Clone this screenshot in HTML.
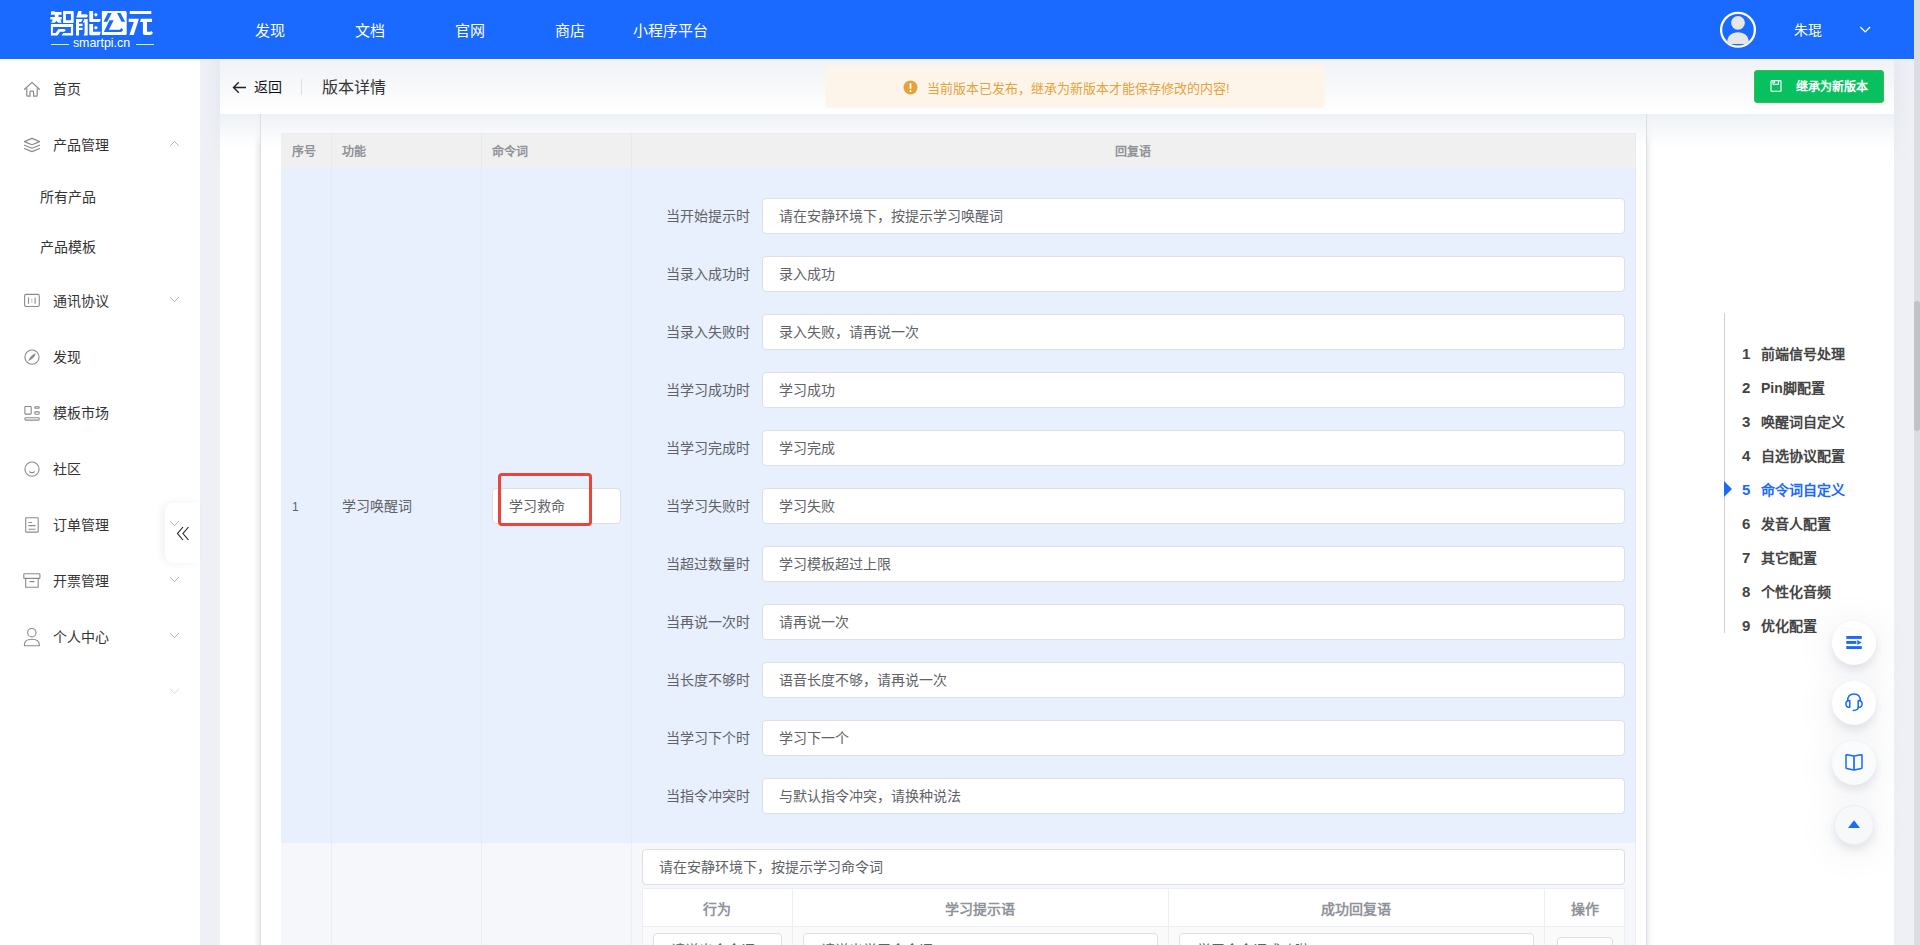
<!DOCTYPE html>
<html lang="zh-CN"><head><meta charset="utf-8">
<style>
*{margin:0;padding:0;box-sizing:border-box}
html,body{width:1920px;height:945px;overflow:hidden;background:#fff;font-family:"Liberation Sans",sans-serif;}
.a{position:absolute}
.t{position:absolute;white-space:nowrap;line-height:1}
.nav{color:#fff;font-size:15px;top:23px;width:100px;text-align:center}
.mi{font-size:14px;color:#333;left:53px}
.sub{font-size:14px;color:#333;left:40px}
.strip{background:#eef0f5}
.lbl{font-size:14px;color:#606266;left:631px;width:119px;text-align:right}
.inp{background:#fff;border:1px solid #dcdfe6;border-radius:4px}
.it{font-size:14px;color:#606266}
.rn{font-size:14px;font-weight:bold;color:#444}
.fb{border-radius:50%;background:#fff;box-shadow:0 5px 10px rgba(40,50,90,.11),0 4px 44px rgba(40,50,90,.09)}
.ic{position:absolute;left:24px}
.chev{position:absolute;left:169px}
</style></head><body>
<div class="a" style="left:0;top:0;width:1914px;height:59px;background:#1a6aff"></div>
<svg class="a" style="left:0;top:0" width="160" height="59" viewBox="0 0 160 59"><g fill="#fff">
<path d="M51.2 11.3 H54.8 V12.1 H61.6 V14.7 H50.8 Z M54.8 14.5 H58.6 V17.2 H54.8 Z M50.3 17 H61.7 V19.6 H60.3 L61.7 22.8 H58.2 L56.4 20.9 L54.8 22.8 H51.1 L52.9 19.6 H50.3 Z"/>
<path fill-rule="evenodd" d="M63.1 11 H72.7 Q73.7 11 73.7 12 V21.9 Q73.7 22.9 72.7 22.9 H63.1 Z M65.9 13.9 V20.2 H70.9 V13.9 Z"/>
<path d="M50.9 24 H73.1 V34.4 Q73.1 35.6 71.9 35.6 H61.6 L63.2 33.1 H70.9 V26.9 H52.9 V33.1 H55.6 L58.5 29 H64.2 L65.8 30.3 L64.2 31.7 H60 L57.6 35.6 H50.9 Z"/>
<path d="M78.3 11.1 H81.7 L81 14.3 H86.6 L88 15.8 L86.8 17.4 H76.3 Z"/>
<path d="M76 19.1 H82.8 L81.2 22 H79 V23.7 H82.6 V26 H79 V27.7 H82.6 V30 H79 V35.4 H76 Z M84.3 19.1 H87.7 V35.4 H83.7 L84.6 33 V22.6 H82.9 Z"/>
<path d="M89.3 11 H93.1 V19.1 H100.8 L100.2 21 Q100 22 99 22 H90.6 Q89.3 22 89.3 20.8 Z M89.3 23.9 H93.1 V31.8 H100.8 L100.2 34 Q100 35.3 99 35.3 H90.6 Q89.3 35.3 89.3 34 Z"/>
<path d="M95.9 12.8 L97.9 14.8 L95.9 16.8 L93.9 14.8 Z M95.9 25.7 L97.9 27.7 L95.9 29.7 L93.9 27.7 Z"/>
<path fill-rule="evenodd" d="M101.9 10.9 H125.2 Q126.7 10.9 126.7 12.4 V33.5 Q126.7 35 125.2 35 H101.9 Z M107.9 13.1 H111.7 L107.3 21.8 H103.5 Z M117 13.1 H120.5 L125.1 21.8 H121.6 Z M109.5 20.2 H113.7 L108.9 29.7 H119.7 L121.6 28 L123.2 29.9 L121.3 32.1 H103.8 Z"/>
<path d="M129.7 11 H151.3 V13.9 H129.7 Z M128.7 18.8 H138.9 L137.9 22 L133.7 35 H129.4 L133.8 22 H128.7 Z M140.9 18.8 H152 V22 H147 V31.8 H150.4 L151.4 30.9 L153 33.1 L151.5 34.6 Q151 35 150 35 H144.6 Q142.9 35 142.9 33.3 V22 H140 Z"/>
</g>
<text x="101.5" y="47.3" font-family="Liberation Sans" font-size="12.4" fill="#fff" text-anchor="middle">smartpi.cn</text>
<rect x="51" y="44" width="18" height="1" fill="#d8e6ff"/><rect x="136" y="44" width="18" height="1" fill="#d8e6ff"/>
</svg>

<div class="t nav" style="left:220px">发现</div>
<div class="t nav" style="left:320px">文档</div>
<div class="t nav" style="left:420px">官网</div>
<div class="t nav" style="left:520px">商店</div>
<div class="t nav" style="left:620px">小程序平台</div>
<svg class="a" style="left:1720px;top:11px" width="37" height="38" viewBox="0 0 37 38">
 <circle cx="18" cy="18.8" r="16.9" fill="none" stroke="#fff" stroke-width="2.3"/>
 <circle cx="18" cy="11.8" r="6.9" fill="#e6e6e6"/>
 <path d="M7.2 33 V31.5 C7.2 24.8 12 21.3 18 21.3 C24 21.3 28.8 24.8 28.8 31.5 V33 Z" fill="#e6e6e6"/>
</svg>
<div class="t" style="left:1794px;top:23px;font-size:14px;color:#fff">朱琨</div>
<svg class="a" style="left:1859px;top:25px" width="13" height="9"><path d="M1.3 2 L6.2 6.9 L11.1 2" fill="none" stroke="#fff" stroke-width="1.3"/></svg>
<div class="a strip" style="left:200px;top:59px;width:20px;height:886px"></div>
<div class="a strip" style="left:1894px;top:59px;width:20px;height:886px"></div>
<div class="a" style="left:1914px;top:0;width:6px;height:945px;background:#dcdde1"></div>
<div class="a" style="left:1914px;top:301px;width:6px;height:130px;background:#c1c2c6;border-radius:3px"></div>
<div class="t mi" style="top:82px">首页</div>
<svg class="a" style="left:24px;top:81px" width="16" height="16" viewBox="0 0 16 16"><path d="M0.6 8.3 L8 1.4 L15.4 8.3" fill="none" stroke="#8a8a8a" stroke-width="1.2" stroke-linejoin="round" stroke-linecap="round"/><path d="M2.8 7.2 V14.2 Q2.8 15.1 3.7 15.1 H6 V10.9 Q6 10.1 6.8 10.1 H8.8 Q9.6 10.1 9.6 10.9 V15.1 H12.3 Q13.2 15.1 13.2 14.2 V7.2" fill="none" stroke="#8a8a8a" stroke-width="1.2"/></svg>
<div class="t mi" style="top:138px">产品管理</div>
<svg class="a" style="left:24px;top:137px" width="16" height="16" viewBox="0 0 16 16"><path d="M8 1.4 L15.6 4.6 L8 7.8 L0.4 4.6 Z" fill="none" stroke="#8a8a8a" stroke-width="1.2" stroke-linejoin="round"/><path d="M0.4 8.2 L8 11.2 L15.6 8.2 M0.4 11.5 L8 14.6 L15.6 11.5" fill="none" stroke="#8a8a8a" stroke-width="1.2" stroke-linejoin="round" stroke-linecap="round"/></svg>
<svg class="chev" style="top:140px" width="11" height="7"><path d="M1 6 L5.5 1.5 L10 6" fill="none" stroke="#b8b8b8" stroke-width="1"/></svg>
<div class="t mi" style="top:294px">通讯协议</div>
<svg class="a" style="left:24px;top:293px" width="16" height="16" viewBox="0 0 16 16"><rect x="0.6" y="1.4" width="14.7" height="12.1" rx="1.6" fill="none" stroke="#8a8a8a" stroke-width="1.1"/><path d="M4.5 4.4 V10.8 M11.1 4.4 V10.8 M7.8 6.2 V7.3 M7.8 8.5 V9.6" stroke="#8a8a8a" stroke-width="1.1"/></svg>
<svg class="chev" style="top:296px" width="11" height="7"><path d="M1 1 L5.5 5.5 L10 1" fill="none" stroke="#b8b8b8" stroke-width="1"/></svg>
<div class="t mi" style="top:350px">发现</div>
<svg class="a" style="left:24px;top:349px" width="16" height="16" viewBox="0 0 16 16"><circle cx="8" cy="8.1" r="7.1" fill="none" stroke="#8a8a8a" stroke-width="1.1"/><path d="M11.9 4.3 Q11 7.8 8.6 9.6 Q6.3 11.4 4.3 11.9 Q5 9 7.4 6.9 Q9.6 5 11.9 4.3 Z" fill="#8a8a8a"/></svg>
<div class="t mi" style="top:406px">模板市场</div>
<svg class="a" style="left:24px;top:405px" width="16" height="16" viewBox="0 0 16 16"><rect x="0.9" y="1.5" width="6.3" height="7.6" rx=".6" fill="none" stroke="#8a8a8a" stroke-width="1.1"/><rect x="10.8" y="1.7" width="4.4" height="1.6" rx=".6" fill="none" stroke="#8a8a8a" stroke-width="1.1"/><rect x="10.8" y="6.9" width="4.4" height="2.3" rx=".6" fill="none" stroke="#8a8a8a" stroke-width="1.1"/><rect x="0.9" y="12.7" width="14.3" height="2.4" rx=".8" fill="none" stroke="#8a8a8a" stroke-width="1.1"/></svg>
<div class="t mi" style="top:462px">社区</div>
<svg class="a" style="left:24px;top:461px" width="16" height="16" viewBox="0 0 16 16"><circle cx="8" cy="8.1" r="7.1" fill="none" stroke="#8a8a8a" stroke-width="1.1"/><path d="M5.6 10.2 Q5.6 11.6 8 11.6 Q10.4 11.6 10.4 10.2" fill="none" stroke="#8a8a8a" stroke-width="1.1"/></svg>
<div class="t mi" style="top:518px">订单管理</div>
<svg class="a" style="left:24px;top:517px" width="16" height="16" viewBox="0 0 16 16"><rect x="1.7" y="0.7" width="12.5" height="14.4" rx=".5" fill="none" stroke="#8a8a8a" stroke-width="1.1"/><path d="M4.4 5.5 H8.1 M4.4 8.6 H11.6 M4.4 12.2 H11.6" stroke="#8a8a8a" stroke-width="1.1"/></svg>
<svg class="chev" style="top:520px" width="11" height="7"><path d="M1 1 L5.5 5.5 L10 1" fill="none" stroke="#b8b8b8" stroke-width="1"/></svg>
<div class="t mi" style="top:574px">开票管理</div>
<svg class="a" style="left:23px;top:573px" width="18" height="16" viewBox="0 0 18 16"><rect x="0.8" y="0.7" width="16.1" height="4.7" rx=".5" fill="none" stroke="#8a8a8a" stroke-width="1.1"/><path d="M2.7 5.4 V14.2 H15.2 V5.4 M6.6 8.6 H11.3" fill="none" stroke="#8a8a8a" stroke-width="1.1"/></svg>
<svg class="chev" style="top:576px" width="11" height="7"><path d="M1 1 L5.5 5.5 L10 1" fill="none" stroke="#b8b8b8" stroke-width="1"/></svg>
<div class="t mi" style="top:630px">个人中心</div>
<svg class="a" style="left:23px;top:627px" width="18" height="22" viewBox="0 0 18 22"><circle cx="8.85" cy="5.7" r="4.2" fill="none" stroke="#8a8a8a" stroke-width="1.1"/><path d="M1.4 18.8 V17.8 C1.4 14.2 4.6 12.2 8.85 12.2 C13.1 12.2 16.3 14.2 16.3 17.8 V18.8 Z" fill="none" stroke="#8a8a8a" stroke-width="1.1" stroke-linejoin="round"/></svg>
<svg class="chev" style="top:632px" width="11" height="7"><path d="M1 1 L5.5 5.5 L10 1" fill="none" stroke="#b8b8b8" stroke-width="1"/></svg>
<div class="t sub" style="top:190px">所有产品</div>
<div class="t sub" style="top:240px">产品模板</div>
<svg class="chev" style="top:688px" width="11" height="7"><path d="M1 1 L5.5 5.5 L10 1" fill="none" stroke="#dedede" stroke-width="1"/></svg>
<div class="a" style="left:165px;top:503px;width:35px;height:60px;background:#fff;border-radius:8px 0 0 8px;box-shadow:-3px 0 8px rgba(0,0,0,.06)"></div>
<svg class="a" style="left:176px;top:526px" width="14" height="15"><path d="M7 1 L1.5 7.5 L7 14 M12.5 1 L7 7.5 L12.5 14" fill="none" stroke="#222" stroke-width="1.15"/></svg>
<svg class="chev" style="top:520px" width="11" height="7"><path d="M1 1 L5.5 5.5 L10 1" fill="none" stroke="#b8b8b8" stroke-width="1"/></svg>
<div class="a" style="left:220px;top:59px;width:1674px;height:55px;background:linear-gradient(#f1f2f6,#fff)"></div>
<svg class="a" style="left:232px;top:81px" width="15" height="13"><path d="M1.5 6.5 H14 M6.8 1.2 L1.5 6.5 L6.8 11.8" fill="none" stroke="#222" stroke-width="1.4"/></svg>
<div class="t" style="left:254px;top:80px;font-size:14px;color:#111">返回</div>
<div class="a" style="left:301px;top:79px;width:1px;height:16px;background:#dcdfe6"></div>
<div class="t" style="left:322px;top:80px;font-size:16px;color:#333">版本详情</div>
<div class="a" style="left:825px;top:65px;width:500px;height:43px;background:#fdf5ea;border-radius:4px"></div>
<svg class="a" style="left:903px;top:80px" width="15" height="15"><circle cx="7.5" cy="7.5" r="7" fill="#e6a23c"/><rect x="6.6" y="3.2" width="1.8" height="5.6" rx=".6" fill="#fff"/><circle cx="7.5" cy="10.9" r="1" fill="#fff"/></svg>
<div class="t" style="left:927px;top:82px;font-size:13px;color:#e6a23c">当前版本已发布，继承为新版本才能保存修改的内容!</div>
<div class="a" style="left:1754px;top:70px;width:130px;height:33px;background:#07c160;border:1px solid #3dbb4a;border-radius:3px"></div>
<svg class="a" style="left:1770px;top:80px" width="12" height="12"><path d="M1 1.5 Q1 .6 1.9 .6 H10.1 Q11 .6 11 1.5 V10.5 Q11 11.4 10.1 11.4 H1.9 Q1 11.4 1 10.5 Z M3 .6 V4.2 H8.5 V.6" fill="none" stroke="#fff" stroke-width="1.1"/><rect x="3.8" y="1.2" width="1.3" height="1.8" fill="#fff"/></svg>
<div class="t" style="left:1796px;top:81px;font-size:12px;font-weight:bold;color:#fff">继承为新版本</div>
<div class="a" style="left:203px;top:59px;width:17px;height:110px;background:linear-gradient(90deg,rgba(80,100,160,0),rgba(80,100,160,.04));-webkit-mask-image:linear-gradient(#000 40%,transparent)"></div>
<div class="a" style="left:1894px;top:59px;width:17px;height:110px;background:linear-gradient(270deg,rgba(80,100,160,0),rgba(80,100,160,.04));-webkit-mask-image:linear-gradient(#000 40%,transparent)"></div>
<div class="a" style="left:0;top:59px;width:1914px;height:1px;background:#fcfbf9"></div>
<div class="a" style="left:254px;top:114px;width:6px;height:831px;background:linear-gradient(90deg,rgba(255,255,255,0),#ebebec)"></div>
<div class="a" style="left:1647px;top:114px;width:7px;height:831px;background:linear-gradient(90deg,#ebeced,#f9f9f9 45%,rgba(255,255,255,0))"></div>
<div class="a" style="left:220px;top:114px;width:1674px;height:34px;background:linear-gradient(#edf0f6,rgba(246,248,251,.8) 55%,rgba(255,255,255,0))"></div>
<div class="a" style="left:260px;top:114px;width:1px;height:831px;background:#dcdfe4"></div>
<div class="a" style="left:1646px;top:114px;width:1px;height:831px;background:#dcdfe4"></div>
<div class="a" style="left:281px;top:133px;width:1355px;height:36px;background:#f0f0f0;border-top:1px solid #e8ebf2"></div>
<div class="a" style="left:281px;top:169px;width:1355px;height:674px;background:#e8effd"></div>
<div class="a" style="left:281px;top:843px;width:1355px;height:102px;background:#f5f7fa"></div>
<div class="a" style="left:331px;top:133px;width:1px;height:36px;background:#e8e9ee"></div>
<div class="a" style="left:331px;top:169px;width:1px;height:674px;background:rgba(0,0,60,.018)"></div>
<div class="a" style="left:331px;top:843px;width:1px;height:102px;background:#eaedf3"></div>
<div class="a" style="left:481px;top:133px;width:1px;height:36px;background:#e8e9ee"></div>
<div class="a" style="left:481px;top:169px;width:1px;height:674px;background:rgba(0,0,60,.018)"></div>
<div class="a" style="left:481px;top:843px;width:1px;height:102px;background:#eaedf3"></div>
<div class="a" style="left:631px;top:133px;width:1px;height:36px;background:#e8e9ee"></div>
<div class="a" style="left:631px;top:169px;width:1px;height:674px;background:rgba(0,0,60,.018)"></div>
<div class="a" style="left:631px;top:843px;width:1px;height:102px;background:#eaedf3"></div>
<div class="a" style="left:1635px;top:133px;width:1px;height:812px;background:rgba(0,0,60,.03)"></div>
<div class="t" style="left:292px;top:146px;font-size:12px;font-weight:bold;color:#909399">序号</div>
<div class="t" style="left:342px;top:146px;font-size:12px;font-weight:bold;color:#909399">功能</div>
<div class="t" style="left:492px;top:146px;font-size:12px;font-weight:bold;color:#909399">命令词</div>
<div class="t" style="left:1115px;top:146px;font-size:12px;font-weight:bold;color:#909399">回复语</div>
<div class="t" style="left:292px;top:501px;font-size:12px;color:#606266">1</div>
<div class="t" style="left:342px;top:499px;font-size:14px;color:#606266">学习唤醒词</div>
<div class="a inp" style="left:492px;top:488px;width:129px;height:36px"></div>
<div class="t it" style="left:509px;top:499px">学习救命</div>
<div class="a" style="left:498px;top:473px;width:94px;height:53px;border:3px solid #e8453c;border-radius:4px"></div>
<div class="t lbl" style="top:209px">当开始提示时</div>
<div class="a inp" style="left:762px;top:198px;width:863px;height:36px"></div>
<div class="t it" style="left:779px;top:209px">请在安静环境下，按提示学习唤醒词</div>
<div class="t lbl" style="top:267px">当录入成功时</div>
<div class="a inp" style="left:762px;top:256px;width:863px;height:36px"></div>
<div class="t it" style="left:779px;top:267px">录入成功</div>
<div class="t lbl" style="top:325px">当录入失败时</div>
<div class="a inp" style="left:762px;top:314px;width:863px;height:36px"></div>
<div class="t it" style="left:779px;top:325px">录入失败，请再说一次</div>
<div class="t lbl" style="top:383px">当学习成功时</div>
<div class="a inp" style="left:762px;top:372px;width:863px;height:36px"></div>
<div class="t it" style="left:779px;top:383px">学习成功</div>
<div class="t lbl" style="top:441px">当学习完成时</div>
<div class="a inp" style="left:762px;top:430px;width:863px;height:36px"></div>
<div class="t it" style="left:779px;top:441px">学习完成</div>
<div class="t lbl" style="top:499px">当学习失败时</div>
<div class="a inp" style="left:762px;top:488px;width:863px;height:36px"></div>
<div class="t it" style="left:779px;top:499px">学习失败</div>
<div class="t lbl" style="top:557px">当超过数量时</div>
<div class="a inp" style="left:762px;top:546px;width:863px;height:36px"></div>
<div class="t it" style="left:779px;top:557px">学习模板超过上限</div>
<div class="t lbl" style="top:615px">当再说一次时</div>
<div class="a inp" style="left:762px;top:604px;width:863px;height:36px"></div>
<div class="t it" style="left:779px;top:615px">请再说一次</div>
<div class="t lbl" style="top:673px">当长度不够时</div>
<div class="a inp" style="left:762px;top:662px;width:863px;height:36px"></div>
<div class="t it" style="left:779px;top:673px">语音长度不够，请再说一次</div>
<div class="t lbl" style="top:731px">当学习下个时</div>
<div class="a inp" style="left:762px;top:720px;width:863px;height:36px"></div>
<div class="t it" style="left:779px;top:731px">学习下一个</div>
<div class="t lbl" style="top:789px">当指令冲突时</div>
<div class="a inp" style="left:762px;top:778px;width:863px;height:36px"></div>
<div class="t it" style="left:779px;top:789px">与默认指令冲突，请换种说法</div>
<div class="a inp" style="left:642px;top:849px;width:983px;height:36px"></div>
<div class="t it" style="left:659px;top:860px">请在安静环境下，按提示学习命令词</div>
<div class="a" style="left:642px;top:888px;width:983px;height:57px;background:#fff;border:1px solid #ebeef5;border-bottom:none"></div>
<div class="a" style="left:643px;top:926px;width:981px;height:19px;background:#fafafa;border-top:1px solid #ebeef5"></div>
<div class="a" style="left:792px;top:888px;width:1px;height:57px;background:#ebeef5"></div>
<div class="a" style="left:1168px;top:888px;width:1px;height:57px;background:#ebeef5"></div>
<div class="a" style="left:1544px;top:888px;width:1px;height:57px;background:#ebeef5"></div>
<div class="t" style="left:642px;width:150px;text-align:center;top:902px;font-size:14px;font-weight:bold;color:#909399">行为</div>
<div class="t" style="left:792px;width:376px;text-align:center;top:902px;font-size:14px;font-weight:bold;color:#909399">学习提示语</div>
<div class="t" style="left:1168px;width:376px;text-align:center;top:902px;font-size:14px;font-weight:bold;color:#909399">成功回复语</div>
<div class="t" style="left:1544px;width:81px;text-align:center;top:902px;font-size:14px;font-weight:bold;color:#909399">操作</div>
<div class="a inp" style="left:653px;top:933px;width:129px;height:36px"></div>
<div class="a inp" style="left:803px;top:933px;width:355px;height:36px"></div>
<div class="a inp" style="left:1179px;top:933px;width:355px;height:36px"></div>
<div class="a inp" style="left:1557px;top:937px;width:56px;height:36px"></div>
<div class="t it" style="left:671px;top:943px">请说出命令词</div>
<div class="t it" style="left:821px;top:943px">请说出学习命令词</div>
<div class="t it" style="left:1197px;top:943px">学习命令词成功啦</div>
<div class="a" style="left:1724px;top:313px;width:1px;height:320px;background:#d0d0d0"></div>
<div class="t rn" style="left:1742px;top:346px;font-size:15px;color:#444">1</div>
<div class="t rn" style="left:1761px;top:347px;color:#444">前端信号处理</div>
<div class="t rn" style="left:1742px;top:380px;font-size:15px;color:#444">2</div>
<div class="t rn" style="left:1761px;top:381px;color:#444">Pin脚配置</div>
<div class="t rn" style="left:1742px;top:414px;font-size:15px;color:#444">3</div>
<div class="t rn" style="left:1761px;top:415px;color:#444">唤醒词自定义</div>
<div class="t rn" style="left:1742px;top:448px;font-size:15px;color:#444">4</div>
<div class="t rn" style="left:1761px;top:449px;color:#444">自选协议配置</div>
<div class="t rn" style="left:1742px;top:482px;font-size:15px;color:#1a6aff">5</div>
<div class="t rn" style="left:1761px;top:483px;color:#1a6aff">命令词自定义</div>
<div class="t rn" style="left:1742px;top:516px;font-size:15px;color:#444">6</div>
<div class="t rn" style="left:1761px;top:517px;color:#444">发音人配置</div>
<div class="t rn" style="left:1742px;top:550px;font-size:15px;color:#444">7</div>
<div class="t rn" style="left:1761px;top:551px;color:#444">其它配置</div>
<div class="t rn" style="left:1742px;top:584px;font-size:15px;color:#444">8</div>
<div class="t rn" style="left:1761px;top:585px;color:#444">个性化音频</div>
<div class="t rn" style="left:1742px;top:618px;font-size:15px;color:#444">9</div>
<div class="t rn" style="left:1761px;top:619px;color:#444">优化配置</div>
<svg class="a" style="left:1724px;top:481px" width="9" height="16"><path d="M0 0 L8 8 L0 16 Z" fill="#1a6aff"/></svg>
<div class="a fb" style="left:1832.0px;top:621.0px;width:44px;height:44px;background:#fff;"></div>
<div class="a fb" style="left:1832.0px;top:681.0px;width:44px;height:44px;background:#fff;"></div>
<div class="a fb" style="left:1832.0px;top:741.0px;width:44px;height:44px;background:#fafbfc;"></div>
<div class="a fb" style="left:1834.0px;top:805.0px;width:40px;height:40px;background:#f7f8fa;border:1px solid #eceef2;"></div>
<svg class="a" style="left:1846px;top:636px" width="16" height="13" viewBox="0 0 16 13"><rect x="0.3" y="0" width="15.5" height="2.9" fill="#1a6aff"/><rect x="0.3" y="5" width="10.1" height="2.9" fill="#1a6aff"/><path d="M11.3 4 L15.6 6.45 L11.3 8.9 Z" fill="#1a6aff"/><rect x="0.3" y="10.1" width="15.5" height="2.9" fill="#1a6aff"/></svg>
<svg class="a" style="left:1845px;top:693px" width="19" height="19" viewBox="0 0 19 19"><path d="M2.6 8 C2.6 3.4 5.3 0.9 9 0.9 C12.7 0.9 15.4 3.4 15.4 8" fill="none" stroke="#1a6aff" stroke-width="1.5"/><path d="M4.8 7.5 Q0.9 7.5 0.9 10.9 Q0.9 14.3 4.8 14.3 Z M13.2 7.5 Q17.1 7.5 17.1 10.9 Q17.1 14.3 13.2 14.3 Z" fill="none" stroke="#1a6aff" stroke-width="1.5" stroke-linejoin="round"/><path d="M13.4 13.8 Q13.4 17.4 8.2 17.4" fill="none" stroke="#1a6aff" stroke-width="1.5" stroke-linecap="round"/></svg>
<svg class="a" style="left:1845px;top:754px" width="18" height="17" viewBox="0 0 18 17"><path d="M1 1.2 Q1 0.6 1.8 0.7 L8.9 2 L8.9 15.9 L1.8 14.5 Q1 14.4 1 13.6 Z M17 1.2 Q17 0.6 16.2 0.7 L9.1 2 L9.1 15.9 L16.2 14.5 Q17 14.4 17 13.6 Z" fill="none" stroke="#1a6aff" stroke-width="1.5" stroke-linejoin="round"/></svg>
<svg class="a" style="left:1847px;top:820px" width="14" height="9" viewBox="0 0 14 9"><path d="M7 0.6 Q7.3 0.6 7.6 1 L13 8.1 H1 L6.4 1 Q6.7 0.6 7 0.6 Z" fill="#1a6aff"/></svg>
</body></html>
